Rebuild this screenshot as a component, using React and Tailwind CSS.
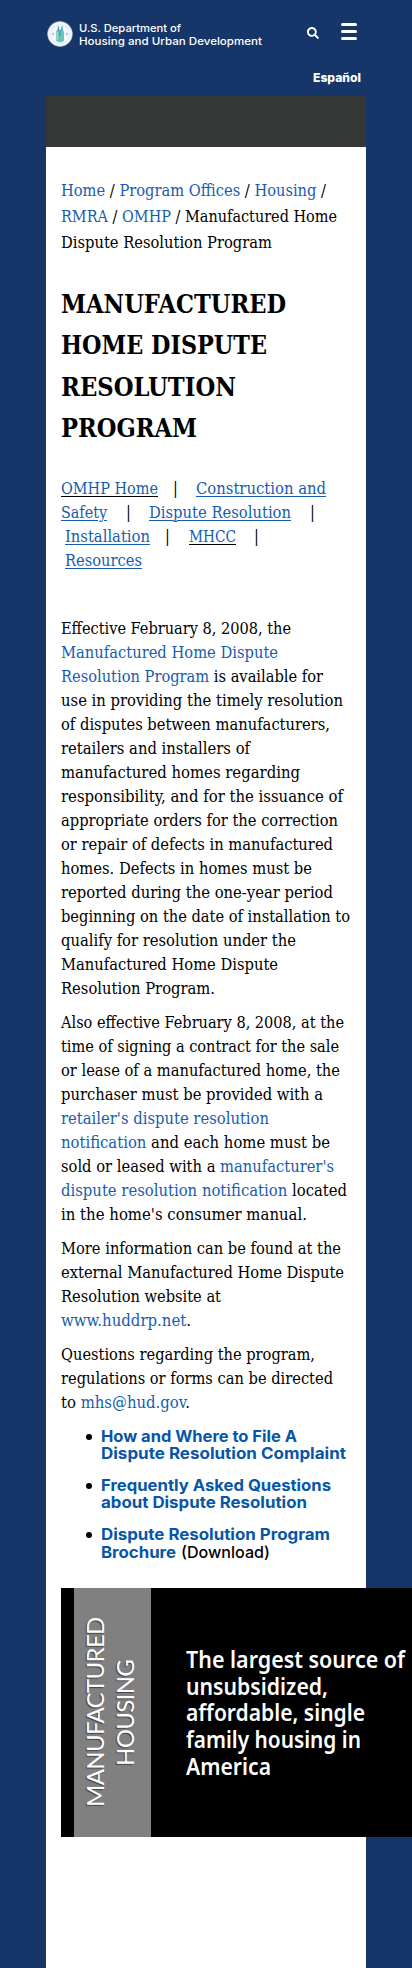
import { useLayoutEffect, useRef } from "react";
import { FaSearch } from "react-icons/fa";

// One line of text, condensed or widened to span exactly `w` pixels.
function Line({ w, className = "", children }) {
  const ref = useRef(null);
  useLayoutEffect(() => {
    const el = ref.current;
    el.style.transform = "none";
    const natural = el.getBoundingClientRect().width;
    el.style.transform = `scaleX(${w / natural})`;
  }, [w]);
  return (
    <span className={`block shrink-0 ${className}`} style={{ width: w }}>
      <span ref={ref} className="inline-block origin-left whitespace-nowrap align-top">
        {children}
      </span>
    </span>
  );
}

function A({ children, className = "text-[#165cb0]" }) {
  return (
    <a href="#" className={className}>
      {children}
    </a>
  );
}

const Bar = ({ className }) => (
  <span className={`w-px shrink-0 text-center ${className}`}>
    <span className="-ml-[2px]">|</span>
  </span>
);

const u = "text-[#165cb0] underline underline-offset-2 decoration-1";
const strong = "text-[#0656a8]";

function Seal() {
  return (
    <svg viewBox="0 0 26 26" className="h-[26px] w-[26px] shrink-0">
      <circle cx="13" cy="13" r="12.4" fill="#f3f7fb" stroke="#b9c3d6" strokeWidth=".6" />
      <circle cx="13" cy="13" r="9.6" fill="none" stroke="#dbe6f1" strokeWidth=".7" />
      <path d="M9.2 20V10.5L11 7.5v-2.500l1.400 3.800h1.400L15.200 5v3l1.800 2.600V20l-3.900 1.600z" fill="#6cc5bd" />
      <path d="M11.300 5.200v4.300M15 5.200v4.300M13.100 9v6" stroke="#3b80a8" strokeWidth=".8" />
      <path d="M10.400 11v8" stroke="#9fdccb" strokeWidth="1" />
      <circle cx="6" cy="13" r=".8" fill="#5d7fae" />
      <circle cx="20" cy="13" r=".8" fill="#5d7fae" />
    </svg>
  );
}

function Item({ children }) {
  return (
    <li className="flex">
      <span className="ml-[25px] mr-[9px] mt-[6px] h-[6px] w-[6px] rounded-full bg-black" />
      <div className="font-bold">{children}</div>
    </li>
  );
}

export default function App() {
  return (
    <div className="h-[1968px] w-[412px] overflow-hidden bg-[#163669] pl-[46px] font-['DejaVu_Serif_Condensed','DejaVu_Serif',serif] text-[16px] text-black">
      <header className="flex h-[96px] w-[320px] flex-col font-['Inter',sans-serif] text-white">
        <div className="flex h-[70px] items-start pt-[21px]">
          <div className="flex pl-px">
            <Seal />
          </div>
          <div className="ml-[6px] mt-[1px] flex flex-col text-[11px] font-medium leading-[13px]">
            <Line w={102}>U.S. Department of</Line>
            <Line w={183}>Housing and Urban Development</Line>
          </div>
          <FaSearch className="ml-[45px] mt-[6px] h-[12px] w-[12px]" />
          <div className="ml-[22px] mt-[2px] flex w-[16px] flex-col gap-[4px]">
            <span className="h-[3px] rounded-full bg-white" />
            <span className="h-[3px] rounded-full bg-white" />
            <span className="h-[3px] rounded-full bg-white" />
          </div>
        </div>
        <div className="flex justify-end pr-[5px] text-[12px] font-extrabold leading-[16px]">
          <Line w={48}>Español</Line>
        </div>
      </header>
      <div className="h-[51px] w-[320px] bg-[#333837]" />
      <main className="h-[1821px] w-[320px] bg-white pl-[15px] pt-[31px]">
        <nav className="leading-[26px]">
          <Line w={265}><A>Home</A> / <A>Program Offices</A> / <A>Housing</A> /</Line>
          <Line w={276}><A>RMRA</A> / <A>OMHP</A> / Manufactured Home</Line>
          <Line w={211}>Dispute Resolution Program</Line>
        </nav>
        <h1 className="mt-[28px] text-[25.6px] font-bold leading-[41.4px]">
          <Line w={225}>MANUFACTURED</Line>
          <Line w={206}>HOME DISPUTE</Line>
          <Line w={175}>RESOLUTION</Line>
          <Line w={136}>PROGRAM</Line>
        </h1>
        <div className="mt-[27px] leading-[24px]">
          <div className="flex">
            <Line w={97}><A className={`${u} decoration-black`}>OMHP Home</A></Line>
            <Bar className="ml-[17px]" />
            <Line w={130} className="ml-[20px]"><A className={u}>Construction and</A></Line>
          </div>
          <div className="flex">
            <Line w={46}><A className={u}>Safety</A></Line>
            <Bar className="ml-[21px]" />
            <Line w={142} className="ml-[20px]"><A className={u}>Dispute Resolution</A></Line>
            <Bar className="ml-[21px]" />
          </div>
          <div className="flex pl-[4px]">
            <Line w={85}><A className={u}>Installation</A></Line>
            <Bar className="ml-[17px]" />
            <Line w={47} className="ml-[21px]"><A className={`${u} decoration-black`}>MHCC</A></Line>
            <Bar className="ml-[20px]" />
          </div>
          <div className="pl-[4px]">
            <Line w={77}><A className={u}>Resources</A></Line>
          </div>
        </div>
        <p className="mt-[44px] leading-[24px]">
          <Line w={230}>Effective February 8, 2008, the</Line>
          <Line w={217}><A>Manufactured Home Dispute</A></Line>
          <Line w={262}><A>Resolution Program</A> is available for</Line>
          <Line w={282}>use in providing the timely resolution</Line>
          <Line w={269}>of disputes between manufacturers,</Line>
          <Line w={189}>retailers and installers of</Line>
          <Line w={239}>manufactured homes regarding</Line>
          <Line w={282}>responsibility, and for the issuance of</Line>
          <Line w={277}>appropriate orders for the correction</Line>
          <Line w={272}>or repair of defects in manufactured</Line>
          <Line w={251}>homes. Defects in homes must be</Line>
          <Line w={272}>reported during the one-year period</Line>
          <Line w={289}>beginning on the date of installation to</Line>
          <Line w={235}>qualify for resolution under the</Line>
          <Line w={217}>Manufactured Home Dispute</Line>
          <Line w={154}>Resolution Program.</Line>
        </p>
        <p className="mt-[10px] leading-[24px]">
          <Line w={283}>Also effective February 8, 2008, at the</Line>
          <Line w={278}>time of signing a contract for the sale</Line>
          <Line w={279}>or lease of a manufactured home, the</Line>
          <Line w={262}>purchaser must be provided with a</Line>
          <Line w={208}><A>retailer's dispute resolution</A></Line>
          <Line w={269}><A>notification</A> and each home must be</Line>
          <Line w={273}>sold or leased with a <A>manufacturer's</A></Line>
          <Line w={286}><A>dispute resolution notification</A> located</Line>
          <Line w={246}>in the home's consumer manual.</Line>
        </p>
        <p className="mt-[10px] leading-[24px]">
          <Line w={280}>More information can be found at the</Line>
          <Line w={283}>external Manufactured Home Dispute</Line>
          <Line w={160}>Resolution website at</Line>
          <Line w={130}><A>www.huddrp.net</A>.</Line>
        </p>
        <p className="mt-[10px] leading-[24px]">
          <Line w={254}>Questions regarding the program,</Line>
          <Line w={272}>regulations or forms can be directed</Line>
          <Line w={129}>to <A>mhs@hud.gov</A>.</Line>
        </p>
        <ul className="mt-[13px] flex flex-col gap-[14px] font-['Inter',sans-serif] text-[16px] leading-[17.6px]">
          <Item>
            <Line w={196}><A className={strong}>How and Where to File A</A></Line>
            <Line w={245}><A className={strong}>Dispute Resolution Complaint</A></Line>
          </Item>
          <Item>
            <Line w={230}><A className={strong}>Frequently Asked Questions</A></Line>
            <Line w={206}><A className={strong}>about Dispute Resolution</A></Line>
          </Item>
          <Item>
            <Line w={229}><A className={strong}>Dispute Resolution Program</A></Line>
            <div className="flex">
              <Line w={75}><A className={strong}>Brochure</A></Line>
              <Line w={89} className="ml-[5px] font-medium">(Download)</Line>
            </div>
          </Item>
        </ul>
        <section className="mt-[27px] flex h-[249px] w-[351px] bg-black pl-[13px] text-white">
          <div className="flex w-[77px] rotate-180 items-center justify-center bg-[#808080] pl-[6px] font-['Lato',sans-serif] text-[24px] leading-[30px] tracking-[-0.65px] [writing-mode:vertical-rl]">
            <div className="text-center [text-shadow:-1px_-1px_1px_#444]">
              <div>MANUFACTURED</div>
              <div>HOUSING</div>
            </div>
          </div>
          <div className="ml-[35px] mt-[58px] font-['Noto_Sans',sans-serif] text-[23.4px] font-semibold leading-[26.6px]">
            <Line w={219}>The largest source of</Line>
            <Line w={142}>unsubsidized,</Line>
            <Line w={179}>affordable, single</Line>
            <Line w={175}>family housing in</Line>
            <Line w={85}>America</Line>
          </div>
        </section>
      </main>
    </div>
  );
}
